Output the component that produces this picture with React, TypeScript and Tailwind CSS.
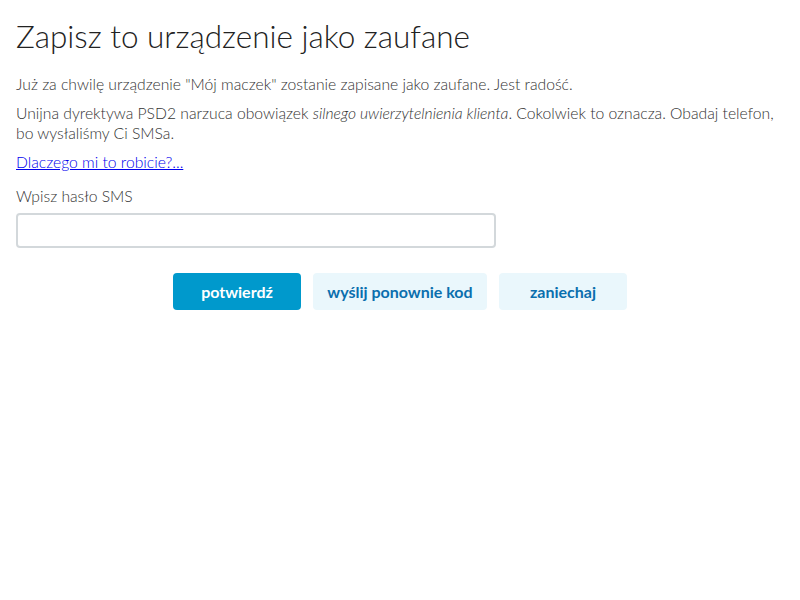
export default function App() {
  return (
    <div className="min-h-[600px] bg-white px-4 pt-[14px] font-['Lato','Open_Sans',sans-serif] text-[#333]">
      <h1 className="text-[31.5px] font-light leading-[44px] text-[#222]">
        Zapisz to urządzenie jako zaufane
      </h1>

      <p className="mt-[16px] text-[15.7px] font-light leading-[20px]">
        Już za chwilę urządzenie "Mój maczek" zostanie zapisane jako zaufane. Jest radość.
      </p>
      <p className="mt-[9px] text-[15.7px] font-light leading-[20px]">
        Unijna dyrektywa PSD2 narzuca obowiązek <em>silnego uwierzytelnienia klienta</em>.
        Cokolwiek to oznacza. Obadaj telefon, bo wysłaliśmy Ci SMSa.
      </p>
      <p className="mt-[9px] text-[15.7px] font-light leading-[20px]">
        <a href="#" className="text-[#0000ee] underline">
          Dlaczego mi to robicie?...
        </a>
      </p>

      <label className="mt-[14px] block text-[15.7px] font-light leading-[20px]">
        Wpisz hasło SMS
      </label>
      <input
        type="text"
        className="mt-[7px] block h-[35px] w-[480px] rounded-[4px] border-2 border-[#d3d8db] bg-white px-2 text-[15px] outline-none"
      />

      <div className="mt-[25px] flex justify-center gap-3">
        <button className="h-[37px] w-[128px] rounded-[4px] bg-[#0099cc] text-[16px] font-bold text-white">
          potwierdź
        </button>
        <button className="h-[37px] w-[174px] rounded-[4px] bg-[#eaf7fc] text-[16px] font-bold text-[#0a6fae]">
          wyślij ponownie kod
        </button>
        <button className="h-[37px] w-[128px] rounded-[4px] bg-[#eaf7fc] text-[16px] font-bold text-[#0a6fae]">
          zaniechaj
        </button>
      </div>
    </div>
  );
}
